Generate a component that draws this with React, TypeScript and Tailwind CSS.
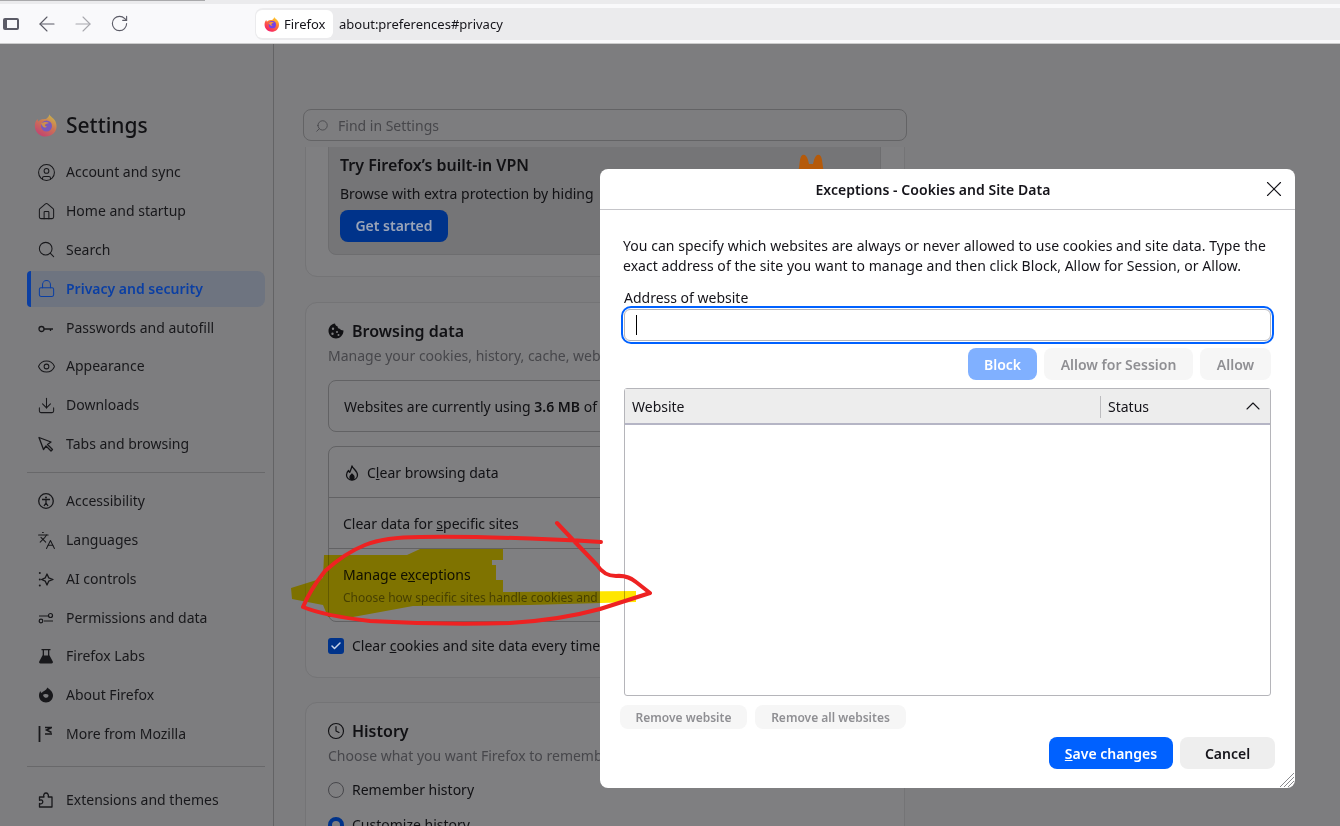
import React from "react";
import { CircleUser, House, Search, Lock, Eye, Download, Languages, ArrowLeft, ArrowRight, RotateCw, X, ChevronUp, Clock, Check } from "lucide-react";

const FF = ({ s = 16, dim = false }: { s?: number; dim?: boolean }) => (
  <svg width={s} height={s} viewBox="0 0 24 24" className={dim ? "opacity-60 shrink-0" : "shrink-0"}>
    <defs>
      <linearGradient id={dim ? "ffa" : "ffb"} x1="0.8" y1="0" x2="0.2" y2="1">
        <stop offset="0" stopColor="#ffe226" />
        <stop offset="0.45" stopColor="#ff7139" />
        <stop offset="1" stopColor="#f5156c" />
      </linearGradient>
    </defs>
    <path d="M15 1c1 2.500 5 4 6.500 7.500 2 4.500 1 9-2 12-4.500 4-11 4-15 .5C1 18 0 13 1.500 9 2 7.500 3 6.500 3.500 6c0 1 .5 2 1 2.500C6 6 10 6 12 6c2-1.500 3.500-3 3-5z" fill={`url(#${dim ? "ffa" : "ffb"})`} />
    <circle cx="12.500" cy="13" r="5.500" fill="#7542e5" />
    <path d="M7 10.500c2-1.500 6-2 8-.5-2 .5-3.500 1-4 2-.5.800 1 1.500 2 1.500-1 2-4 1.500-6-3z" fill="#ff9a2e" />
  </svg>
);

const Key = () => (
  <svg width="16" height="16" viewBox="0 0 16 16" fill="none" stroke="currentColor" strokeWidth="1.300"><circle cx="3.500" cy="9" r="2.500" /><path d="M6 9h9M12.500 9v2" /></svg>
);
const Cursor = () => (
  <svg width="16" height="16" viewBox="0 0 16 16" fill="none" stroke="currentColor" strokeWidth="1.300" strokeLinejoin="round"><path d="M1 1.500 13 6 9.500 8.500 14.500 13.500 13 15 8 10 5.500 13.500 1 1.500z" /></svg>
);
const Access = () => (
  <svg width="16" height="16" viewBox="0 0 16 16" fill="none" stroke="currentColor" strokeWidth="1.300"><circle cx="8" cy="8" r="7.300" /><circle cx="8" cy="4.500" r="1" fill="currentColor" stroke="none" /><path d="M4 6.500h8M8 6.500V10M8 10l-2 3M8 10l2 3" /></svg>
);
const Sparkle = () => (
  <svg width="16" height="16" viewBox="0 0 16 16" fill="none" stroke="currentColor" strokeWidth="1.300" strokeLinejoin="round"><path d="M9 3 10.700 6.800l4.300 1.700-4.300 1.700L9 14l-1.700-3.800L3.500 8.500l3.800-1.700z" /><circle cx="1.800" cy="2" r="1" fill="currentColor" stroke="none" /><circle cx="1.800" cy="8.500" r="1" fill="currentColor" stroke="none" /><circle cx="1.800" cy="14.500" r="1" fill="currentColor" stroke="none" /></svg>
);
const Sliders = () => (
  <svg width="16" height="16" viewBox="0 0 16 16" fill="none" stroke="currentColor" strokeWidth="1.200"><path d="M1 6h9M6 11h9" /><circle cx="12.500" cy="5.500" r="2" /><circle cx="3" cy="11" r="1.800" /></svg>
);
const Flask = () => (
  <svg width="16" height="16" viewBox="0 0 16 16" fill="currentColor"><path d="M3.500 1h9v1.300h-1.200V7l3.500 6.500c.4 1-.2 2-1.300 2H2.500c-1.100 0-1.700-1-1.300-2L4.700 7V2.300H3.500zM6 2.300V7.500h4V2.300z" /></svg>
);
const FfMono = () => (
  <svg width="16" height="16" viewBox="0 0 16 16"><path d="M9.500.5c1 1.500 5 3 5.500 7.500.3 4-3 7.500-7 7.500S1 12.500 1 8.500C1 6.500 1.700 5 2.500 4c0 1 .4 1.500 1 2C5 4.300 8 3.700 9.500.5z" fill="currentColor" /><path d="M5 8c1-1 3.500-1.500 5-.5 1 .8.500 3-1.500 3.300C7 11 5.500 10 5 8z" fill="#7d7d7f" /></svg>
);
const Moz = () => (
  <svg width="16" height="16" viewBox="0 0 16 16" fill="none" stroke="currentColor" strokeWidth="1.500"><path d="M1.500 0v16" strokeWidth="1.800" /><path d="M7 1.500h7M13.500 1.500 8.500 4l5 2.500M7 8h7" /></svg>
);
const Ext = () => (
  <svg width="16" height="16" viewBox="0 0 16 16" fill="none" stroke="currentColor" strokeWidth="1.300" strokeLinejoin="round"><path d="M1.500 5H6C5 2.500 6.500 1 8 1s3 1.500 2.200 4h3.800v10H1.500v-3.500c2 .8 3.300-.3 3.300-1.700S3.500 7.300 1.500 8.300z" /></svg>
);
const Cookie = () => (
  <svg width="16" height="16" viewBox="0 0 16 16" fill="currentColor" fillRule="evenodd"><path d="M7 .5c.2 1.500 1 2.500 2.500 2.700 0 1.500 1 2.600 2.500 2.600.3 1 1.500 1.700 3.500 1.700C15.500 12 12 15.500 8 15.500S.5 12 .5 8 3.500.7 7 .5zM5 4.500a1.200 1.200 0 1 0 0 2.400 1.200 1.200 0 0 0 0-2.400zM4.500 9.500a1.200 1.200 0 1 0 0 2.400 1.200 1.200 0 0 0 0-2.400zM9 8a1 1 0 1 0 0 2 1 1 0 0 0 0-2zM10.500 11a1 1 0 1 0 0 2 1 1 0 0 0 0-2z" /></svg>
);
const Flame = () => (
  <svg width="16" height="16" viewBox="0 0 16 16" fill="none" stroke="currentColor" strokeWidth="1.300" strokeLinejoin="round"><path d="M8 .8c.5 2.500 5.500 5 5.500 9.200 0 3-2.500 5-5.500 5s-5.500-2-5.500-5c0-2 1-3.500 2-4.500.2 1 .7 1.500 1.300 1.800C6.500 5 7.800 3 8 .8z" /><path d="M8 9c.5 1 2 1.500 2 3s-1 2.500-2 2.500-2-1-2-2.500S7.500 10 8 9z" fill="currentColor" /></svg>
);

const top = [
  [CircleUser, "Account and sync"],
  [House, "Home and startup"],
  [Search, "Search"],
  [Lock, "Privacy and security"],
  [Key, "Passwords and autofill"],
  [Eye, "Appearance"],
  [Download, "Downloads"],
  [Cursor, "Tabs and browsing"],
] as const;
const mid = [
  [Access, "Accessibility"],
  [Languages, "Languages"],
  [Sparkle, "AI controls"],
  [Sliders, "Permissions and data"],
  [Flask, "Firefox Labs"],
  [FfMono, "About Firefox"],
  [Moz, "More from Mozilla"],
] as const;

function NavItem({ Icon, label }: { Icon: React.ComponentType<any>; label: string }) {
  const active = label === "Privacy and security";
  return (
    <div className={active
      ? "h-[36px] my-[1.400px] flex items-center rounded-r-lg rounded-l-[4px] bg-[#6e7480] border-l-4 border-[#0b3fa3] text-[#0b3fa3] font-semibold"
      : "h-[38.800px] flex items-center text-[#18181b] border-l-4 border-transparent"}>
      <span className="w-[16px] ml-[7px] mr-[12px] flex items-center justify-center"><Icon size={19} strokeWidth={1.300} className="shrink-0" /></span>
      <span className="whitespace-nowrap">{label}</span>
    </div>
  );
}

export default function App() {
  return (
    <div className="relative w-[1340px] h-[826px] overflow-hidden bg-[#7d7d7f] text-[14px] leading-[20px] text-[#111114] font-['Noto_Sans','Liberation_Sans',sans-serif]">
      <header className="h-[44px] bg-[#f9f9fb] border-b border-[#cccccc] flex flex-col">
        <div className="h-[4px] bg-[#ebebed]"><div className="h-[1px] w-[205px] bg-[#a9a9ab]" /></div>
        <div className="flex-1 flex items-center text-[#5b5b66]">
          <span className="ml-[3px] w-[16px] h-[12px] rounded-[2px] border-2 border-l-4 border-[#5b5b66]" />
          <ArrowLeft size={24} className="ml-[16px]" strokeWidth={1.100} />
          <ArrowRight size={24} className="ml-[12px] text-[#a8a8ae]" strokeWidth={1.100} />
          <RotateCw size={19} className="ml-[14.500px]" strokeWidth={1.400} />
          <div className="ml-[126.500px] mt-[1px] flex-1 h-[32px] bg-[#ebebed] rounded-l-lg flex items-center text-[13px] text-[#15141a]">
            <div className="h-[28px] w-[77px] bg-white rounded-md flex items-center gap-[4px] pl-[8px] ml-[1px]">
              <FF s={16} /> <span>Firefox</span>
            </div>
            <span className="ml-[6px]">about:preferences#privacy</span>
          </div>
        </div>
      </header>

      <div className="flex h-[782px]">
        <aside className="w-[274px] shrink-0 border-r border-[#636365] pl-[27px] pr-[8px]">
          <div className="h-[109px] pl-[7px] pt-[57px]">
            <div className="flex items-center gap-[8px] h-[48px]">
              <FF s={24} dim />
              <span className="text-[21px] leading-[28px] font-medium">Settings</span>
            </div>
          </div>
          {top.map(([I, l]) => <NavItem key={l} Icon={I} label={l} />)}
          <div className="h-[1px] bg-[#68686a] mt-[8.500px] mb-[9px]" />
          {mid.map(([I, l]) => <NavItem key={l} Icon={I} label={l} />)}
          <div className="h-[1px] bg-[#68686a] mt-[12.400px] mb-[14px]" />
          <NavItem Icon={Ext} label="Extensions and themes" />
        </aside>

        <main className="flex-1 pl-[29px] flex flex-col min-w-0">
          <div className="mt-[65px] h-[32px] w-[604px] rounded-lg border border-[#636365] flex items-center pl-[11px] gap-[9px] pt-[1px] text-[#47474b]">
            <Search size={14} className="-scale-x-100" strokeWidth={1.500} />
            <span>Find in Settings</span>
          </div>

          <div className="mt-[6px] flex-1 overflow-hidden pl-[2px]">
            <section className="-mt-[30px] w-[600px] h-[160px] rounded-xl border border-[#747476] bg-[#7f7f81] px-[22px] pt-[13px]">
              <div className="relative h-[124px] w-[553px] rounded-lg border border-[#6d6d6f] bg-[#757577] pl-[11px] pt-[21px]">
                <div className="text-[16px] leading-[24px] font-semibold">Try Firefox’s built-in VPN</div>
                <div className="mt-[7px] whitespace-nowrap">Browse with extra protection by hiding</div>
                <div className="mt-[6px] h-[32px] w-[108px] rounded-lg bg-[#00338a] text-[#9aa4b8] font-semibold flex items-center justify-center">Get started</div>
                <svg width="30" height="30" viewBox="0 0 30 30" className="absolute left-[467px] top-[20px]">
                  <path d="M1 30 4 8c1-7 6-7 8 0l1 4h4l1-4c2-7 7-7 8 0l3 22z" fill="#b55a0a" />
                </svg>
              </div>
            </section>

            <section className="mt-[25px] w-[600px] h-[376px] rounded-xl border border-[#747476] bg-[#7f7f81] px-[22px] pt-[16px]">
              <div className="flex items-center gap-[8px] text-[16px] leading-[24px] font-semibold"><Cookie /> Browsing data</div>
              <div className="mt-[3px] text-[#47474b] whitespace-nowrap">Manage your cookies, history, cache, web</div>
              <div className="mt-[14px] h-[52px] w-[553px] rounded-lg border border-[#626264] pl-[15px] pt-[1px] flex items-center whitespace-nowrap">Websites are currently using&nbsp;<b className="font-semibold">3.6 MB</b>&nbsp;of</div>
              <div className="mt-[14px] w-[553px] rounded-lg border border-[#626264]">
                <div className="h-[51px] flex items-center pl-[15px] pt-[1px] gap-[7px] border-b border-[#626264]"><Flame /><span>C<u>l</u>ear browsing data</span></div>
                <div className="h-[51px] flex items-center pl-[14px] pt-[1px] border-b border-[#626264]"><span>Clear data for <u>s</u>pecific sites</span></div>
                <div className="h-[72px] pl-[14px] pt-[16px]">
                  <div>Manage e<u>x</u>ceptions</div>
                  <div className="mt-[4px] text-[12px] leading-[18px] text-[#47474b] whitespace-nowrap">Choose how specific sites handle cookies and</div>
                </div>
              </div>
              <div className="mt-[14px] flex items-center gap-[8px] whitespace-nowrap">
                <span className="w-[16px] h-[16px] rounded-[3px] bg-[#00338a] flex items-center justify-center text-[#c9d4e8]"><Check size={12} strokeWidth={3} /></span>
                <span>Clear <u>c</u>ookies and site data every time</span>
              </div>
            </section>

            <section className="mt-[24px] w-[600px] h-[200px] rounded-xl border border-[#747476] bg-[#7f7f81] px-[22px] pt-[16px]">
              <div className="flex items-center gap-[8px] text-[16px] leading-[24px] font-semibold"><Clock size={18} strokeWidth={1.500} className="-mx-[1px]" /> History</div>
              <div className="mt-[3px] text-[#47474b] whitespace-nowrap">Choose what you want Firefox to rememb</div>
              <div className="mt-[14px] flex items-center gap-[8px]"><span className="w-[16px] h-[16px] rounded-full border border-[#47474b]" />Remember history</div>
              <div className="mt-[15px] flex items-center gap-[8px]"><span className="w-[16px] h-[16px] rounded-full border-[4px] border-[#00338a] bg-[#7f7f81]" />Customize history</div>
            </section>
          </div>
        </main>
      </div>

      {/* dialog */}
      <div className="absolute left-[600px] top-[169px] w-[695px] h-[619px] bg-white rounded-lg flex flex-col text-[#15141a]">
        <div className="relative h-[41px] shrink-0 border-b border-[#c5c5c9] flex items-center justify-center pt-[1px] pr-[29px] font-semibold tracking-[0.050px]">
          Exceptions - Cookies and Site Data
          <X size={26} strokeWidth={1} className="absolute right-[8px] top-[7px]" />
        </div>
        <div className="pl-[24px] pr-[24px] pt-[26px] flex-1 flex flex-col">
          <p className="w-[655px] -ml-[1px] tracking-[0.040px]">You can specify which websites are always or never allowed to use cookies and site data. Type the exact address of the site you want to manage and then click Block, Allow for Session, or Allow.</p>
          <div className="mt-[12px] h-[18px]">Address of website</div>
          <div className="-ml-[3px] w-[653px] h-[38px] rounded-[10px] border-2 border-[#0061ff] p-[1px]">
            <div className="h-full rounded-md border border-[#b5b5ba] pl-[11px] flex items-center"><span className="w-[1px] h-[20px] bg-black" /></div>
          </div>
          <div className="mt-[4px] w-[647px] flex justify-end gap-[7px] h-[32px] pt-0">
            <span className="w-[69px] rounded-lg pt-[1px] bg-[#80b0ff] text-white font-semibold flex items-center justify-center">Block</span>
            <span className="w-[149px] rounded-lg pt-[1px] bg-[#f6f6f6] text-[#8f8f93] font-semibold flex items-center justify-center">Allow for Session</span>
            <span className="w-[71px] rounded-lg pt-[1px] bg-[#f6f6f6] text-[#8f8f93] font-semibold flex items-center justify-center">Allow</span>
          </div>
          <div className="mt-[8px] w-[647px] h-[308px] rounded-[3px] border border-[#b5b5ba] flex flex-col">
            <div className="h-[36px] bg-[#ededed] border-b-2 border-[#b5b5c5] flex items-center pt-[1px] relative">
              <span className="pl-[7px] w-[475px]">Website</span>
              <span className="h-[22px] w-[1px] bg-[#bcbcbf]" />
              <span className="pl-[7px]">Status</span>
              <ChevronUp size={24} strokeWidth={1.100} className="absolute right-[5px] top-[5px]" />
            </div>
          </div>
          <div className="mt-[9px] -ml-[4px] flex gap-[8px] h-[24px] text-[12px] text-[#8f8f93] font-semibold">
            <span className="w-[127px] rounded-lg pt-[2px] bg-[#f6f6f6] flex items-center justify-center">Remove website</span>
            <span className="w-[151px] rounded-lg pt-[2px] bg-[#f6f6f6] flex items-center justify-center">Remove all websites</span>
          </div>
          <div className="mt-[8px] w-[651px] flex justify-end gap-[7px] h-[32px] font-semibold">
            <span className="w-[124px] rounded-lg pt-[1px] bg-[#0061ff] text-white flex items-center justify-center"><span><u>S</u>ave changes</span></span>
            <span className="w-[95px] rounded-lg pt-[1px] bg-[#eeeeee] flex items-center justify-center">Cancel</span>
          </div>
        </div>
        <svg width="16" height="16" viewBox="0 0 16 16" className="absolute right-0 bottom-0" stroke="#8a8a8e" strokeWidth="1" fill="none"><path d="M1 15 15 1M5 15 15 5M9 15l6-6" /></svg>
      </div>

      {/* annotations */}
      <svg width="1340" height="826" className="absolute inset-0 mix-blend-multiply pointer-events-none">
        <path d="M324 555 407 555 420 549 503 549 503 560 492 560 492 565 496 565 496 580 503 580 503 592 636 591 636 602 530 605 413 606 353 617 328 617 323 605 292 599 291 588 323 578z" fill="#ffe600" />
      </svg>
      <svg width="1340" height="826" fill="none" className="absolute inset-0 pointer-events-none">
        <path d="M557 523 575 542 597 565Q604 576 616 576 628 575 636 582L650 593Q625 601 600 609 560 620 510 623 440 625 370 621 325 616 303 607 310 590 325 571 345 553 365 545 385 537 420 537 500 536 601 542" stroke="#ee2222" strokeWidth="4" strokeLinejoin="round" strokeLinecap="round" />
      </svg>
    </div>
  );
}
